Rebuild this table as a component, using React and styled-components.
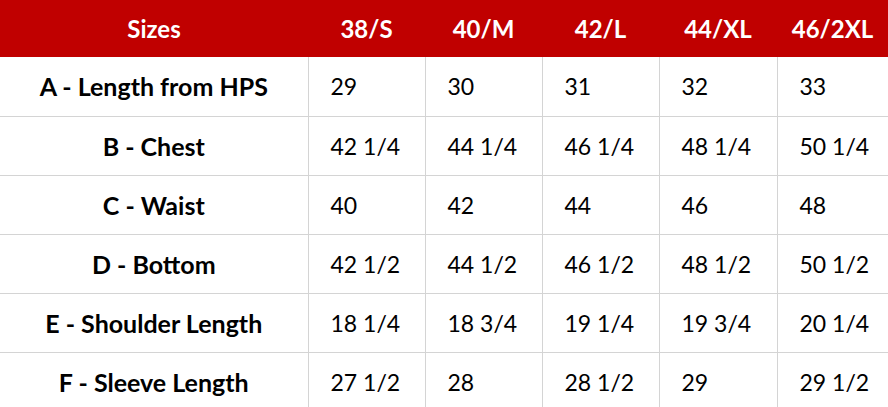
import styled, { createGlobalStyle } from "styled-components";

const GlobalStyle = createGlobalStyle`
  html, body {
    margin: 0;
    padding: 0;
    background: #ffffff;
  }
  body {
    font-family: Lato, "Open Sans", "Liberation Sans", sans-serif;
  }
`;

const sizes = ["38/S", "40/M", "42/L", "44/XL", "46/2XL"];

const rows = [
  ["A - Length from HPS", "29", "30", "31", "32", "33"],
  ["B - Chest", "42 1/4", "44 1/4", "46 1/4", "48 1/4", "50 1/4"],
  ["C - Waist", "40", "42", "44", "46", "48"],
  ["D - Bottom", "42 1/2", "44 1/2", "46 1/2", "48 1/2", "50 1/2"],
  ["E - Shoulder Length", "18 1/4", "18 3/4", "19 1/4", "19 3/4", "20 1/4"],
  ["F - Sleeve Length", "27 1/2", "28", "28 1/2", "29", "29 1/2"],
];

const colWidths = [308, 117, 117, 117, 118, 111];

const App = () => {
  return (
    <>
      <GlobalStyle />
      <Table>
        <colgroup>
          {colWidths.map((w, i) => (
            <col key={i} style={{ width: w }} />
          ))}
        </colgroup>
        <thead>
          <HeadRow>
            <HeadCell>Sizes</HeadCell>
            {sizes.map((s) => (
              <HeadCell key={s}>{s}</HeadCell>
            ))}
          </HeadRow>
        </thead>
        <tbody>
          {rows.map(([label, ...values]) => (
            <Row key={label}>
              <LabelCell>{label}</LabelCell>
              {values.map((v, i) => (
                <Cell key={i}>{v}</Cell>
              ))}
            </Row>
          ))}
        </tbody>
      </Table>
    </>
  );
};

const Table = styled.table`
  width: 888px;
  table-layout: fixed;
  border-collapse: collapse;
  border-spacing: 0;
  color: #000000;
  font-size: 23px;
`;

const HeadRow = styled.tr`
  height: 57px;
  background: #c00000;
`;

const HeadCell = styled.th`
  padding: 0;
  color: #ffffff;
  font-size: 24px;
  font-weight: 700;
  text-align: center;
  vertical-align: middle;
`;

const Row = styled.tr`
  height: 59px;
  border-bottom: 1px solid #d4d4d4;
  &:last-child {
    border-bottom: none;
  }
`;

const LabelCell = styled.td`
  padding: 0;
  font-size: 25px;
  font-weight: 700;
  text-align: center;
  vertical-align: middle;
  border-right: 1px solid #d4d4d4;
  white-space: nowrap;
`;

const Cell = styled.td`
  padding: 0 0 0 22px;
  font-weight: 400;
  text-align: left;
  vertical-align: middle;
  border-right: 1px solid #d4d4d4;
  white-space: nowrap;
  &:last-child {
    border-right: none;
  }
`;

export default App;
